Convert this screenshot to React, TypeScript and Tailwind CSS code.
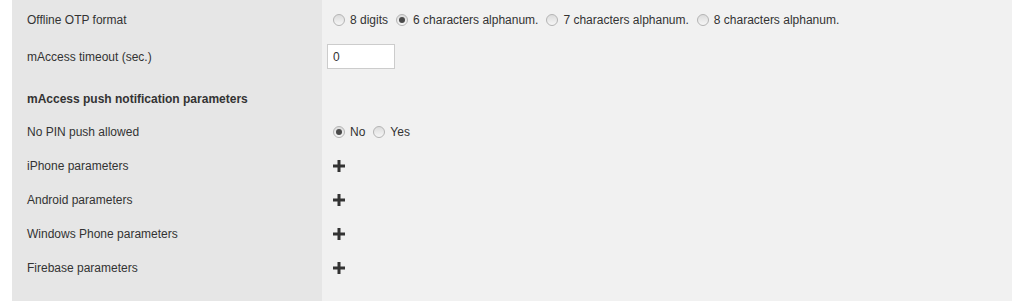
import React from 'react';

const Radio = ({ checked, label }: { checked?: boolean; label: string }) => (
  <label className="inline-flex items-center mr-[3px]">
    <span className="ml-[5px] mr-[5px] w-[12px] h-[12px] rounded-full border border-[#b4b4b4] bg-gradient-to-b from-[#dcdcdc] to-[#f6f6f6] flex items-center justify-center">
      {checked && <span className="w-[6px] h-[6px] rounded-full bg-[#4a4a4a]" />}
    </span>
    <span>{label}</span>
  </label>
);

const Plus = () => (
  <svg width="12" height="12" viewBox="0 0 12 12" className="ml-[5px]">
    <path d="M4.5 0h3v4.5H12v3H7.5V12h-3V7.5H0v-3h4.5z" fill="#333" />
  </svg>
);

const Row = ({ label, h, children }: { label: string; h: string; children?: React.ReactNode }) => (
  <div className={`flex ${h}`}>
    <div className="w-[310px] bg-[#e6e6e6] pl-[15px] flex items-center">{label}</div>
    <div className="flex-1 bg-[#f1f1f1] pl-[6px] flex items-center">{children}</div>
  </div>
);

export default function App() {
  return (
    <div className="h-[301px] pl-[12px] pr-[9px] bg-white text-[12px] text-[#333] font-['Liberation_Sans',Arial,sans-serif]">
      <div className="h-full flex flex-col bg-[#f1f1f1]">
        <Row label="Offline OTP format" h="h-[40px]">
          <Radio label="8 digits" />
          <Radio checked label="6 characters alphanum." />
          <Radio label="7 characters alphanum." />
          <Radio label="8 characters alphanum." />
        </Row>
        <Row label="mAccess timeout (sec.)" h="h-[33px]">
          <input
            defaultValue="0"
            className="-ml-[1px] w-[68px] h-[25px] border border-[#ccc] bg-white px-[5px] text-[12px] outline-none"
          />
        </Row>
        <div className="flex h-[42px]">
          <div className="w-[310px] bg-[#e6e6e6] pl-[15px] pt-[17px] font-bold">mAccess push notification parameters</div>
          <div className="flex-1 bg-[#f1f1f1]" />
        </div>
        <Row label="No PIN push allowed" h="h-[34px]">
          <Radio checked label="No" />
          <Radio label="Yes" />
        </Row>
        <Row label="iPhone parameters" h="h-[34px]"><Plus /></Row>
        <Row label="Android parameters" h="h-[34px]"><Plus /></Row>
        <Row label="Windows Phone parameters" h="h-[34px]"><Plus /></Row>
        <Row label="Firebase parameters" h="h-[34px]"><Plus /></Row>
        <div className="flex flex-1">
          <div className="w-[310px] bg-[#e6e6e6]" />
          <div className="flex-1 bg-[#f1f1f1]" />
        </div>
      </div>
    </div>
  );
}
